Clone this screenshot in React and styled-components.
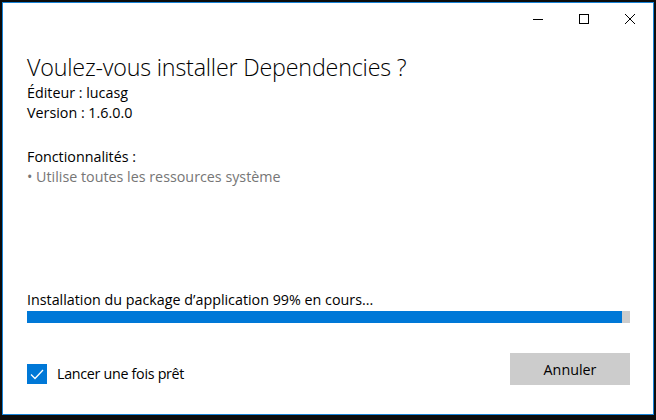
import styled, { createGlobalStyle } from "styled-components";

const GlobalStyle = createGlobalStyle`
  html, body {
    margin: 0;
    padding: 0;
    background: #0c0c0c;
    width: 656px;
    height: 420px;
    overflow: hidden;
  }
  * { box-sizing: border-box; }
`;

export default function App() {
  return (
    <>
      <GlobalStyle />
      <Desktop>
        <Window>
          <TitleBar>
            <ControlButton aria-label="minimize">
              <svg width="10" height="10" viewBox="0 0 10 10">
                <path d="M0 5.5h10" stroke="#000" strokeWidth="1" />
              </svg>
            </ControlButton>
            <ControlButton aria-label="maximize">
              <svg width="10" height="10" viewBox="0 0 10 10">
                <rect x="0.5" y="0.5" width="9" height="9" fill="none" stroke="#000" strokeWidth="1" />
              </svg>
            </ControlButton>
            <ControlButton aria-label="close">
              <svg width="10" height="10" viewBox="0 0 10 10">
                <path d="M0 0L10 10M10 0L0 10" stroke="#000" strokeWidth="1" />
              </svg>
            </ControlButton>
          </TitleBar>

          <Body>
            <Heading>Voulez-vous installer Dependencies ?</Heading>
            <Line>Éditeur : lucasg</Line>
            <Line>Version : 1.6.0.0</Line>

            <Section>
              <Line>Fonctionnalités :</Line>
              <Line $muted>• Utilise toutes les ressources système</Line>
            </Section>

            <Progress>
              <Line>Installation du package d’application 99% en cours...</Line>
              <Track>
                <Fill style={{ width: "98.7%" }} />
              </Track>
            </Progress>

            <Footer>
              <CheckRow>
                <CheckBox>
                  <svg width="14" height="11" viewBox="0 0 14 11">
                    <path d="M1 5.5L5 9.5L13 1" fill="none" stroke="#fff" strokeWidth="1.3" />
                  </svg>
                </CheckBox>
                <Line $tight>Lancer une fois prêt</Line>
              </CheckRow>
              <Button>Annuler</Button>
            </Footer>
          </Body>
        </Window>
      </Desktop>
    </>
  );
}

const Desktop = styled.div`
  width: 656px;
  height: 420px;
  padding: 2px 2px 5px 2px;
`;

const Window = styled.div`
  width: 652px;
  height: 413px;
  background: #fff;
  border: 1px solid #1883d7;
  display: flex;
  flex-direction: column;
  font-family: "Open Sans", "Liberation Sans", sans-serif;
  color: #000;
`;

const TitleBar = styled.div`
  height: 31px;
  display: flex;
  justify-content: flex-end;
`;

const ControlButton = styled.div`
  width: 46px;
  height: 31px;
  display: flex;
  align-items: center;
  justify-content: center;
`;

const Body = styled.div`
  flex: 1;
  display: flex;
  flex-direction: column;
  padding: 18px 23px 29px 24px;
`;

const Heading = styled.h1`
  margin: 0;
  font-size: 23.3px;
  font-weight: 300;
  line-height: 31px;
  letter-spacing: -0.2px;
`;

const Line = styled.div`
  font-size: 14.3px;
  line-height: 20px;
  letter-spacing: ${(p) => (p.$tight ? "-0.3px" : "0")};
  color: ${(p) => (p.$muted ? "#767676" : "#000")};
`;

const Section = styled.div`
  margin-top: 24px;
`;

const Progress = styled.div`
  margin-top: auto;
  display: flex;
  flex-direction: column;
`;

const Track = styled.div`
  height: 12px;
  margin-top: 1px;
  background: #cccccc;
`;

const Fill = styled.div`
  height: 100%;
  background: #0078d7;
`;

const Footer = styled.div`
  margin-top: 30px;
  display: flex;
  align-items: center;
  justify-content: space-between;
`;

const CheckRow = styled.div`
  display: flex;
  align-items: center;
  gap: 10px;
  margin-top: 10px;
`;

const CheckBox = styled.div`
  width: 20px;
  height: 20px;
  background: #0078d7;
  display: flex;
  align-items: center;
  justify-content: center;
`;

const Button = styled.div`
  width: 120px;
  height: 32px;
  background: #cccccc;
  font-size: 14.3px;
  display: flex;
  align-items: center;
  justify-content: center;
`;
